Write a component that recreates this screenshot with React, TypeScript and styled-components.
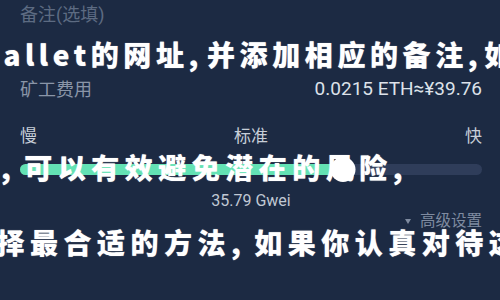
import styled, { createGlobalStyle } from 'styled-components';

const GlobalStyle = createGlobalStyle`
  html, body {
    margin: 0;
    padding: 0;
    background: #1c2a43;
  }
  body {
    font-family: Roboto, "Noto Sans CJK SC", sans-serif;
  }
`;

const Screen = styled.div`
  position: relative;
  width: 500px;
  height: 300px;
  box-sizing: border-box;
  padding: 3px 18px 0 20px;
  background: #1c2a43;
  overflow: hidden;
  display: flex;
  flex-direction: column;
`;

const Placeholder = styled.div`
  font-size: 18px;
  line-height: 24px;
  color: #5d6b82;
`;

const FeeRow = styled.div`
  margin-top: 49px;
  height: 24px;
  display: flex;
  justify-content: space-between;
  align-items: center;
`;

const Label = styled.span`
  font-size: 18px;
  color: #8a95a8;
`;

const FeeValue = styled.span`
  font-size: 19px;
  color: #dde2ea;
`;

const SpeedRow = styled.div`
  margin-top: 22px;
  height: 24px;
  display: grid;
  grid-template-columns: 1fr auto 1fr;
  align-items: center;
  font-size: 17px;
  color: #c7ced8;
`;

const Speed = styled.span<{ $align: 'left' | 'center' | 'right' }>`
  text-align: ${p => p.$align};
`;

const Slider = styled.div`
  position: relative;
  margin-top: 11px;
  height: 25px;
  display: flex;
  align-items: center;
`;

const Track = styled.div`
  flex: 1;
  height: 11px;
  border-radius: 6px;
  background: #2f3d5a;
  overflow: hidden;
`;

const Fill = styled.div`
  height: 100%;
  background: #63e2b4;
`;

const Thumb = styled.div`
  position: absolute;
  top: 0;
  width: 25px;
  height: 25px;
  border-radius: 50%;
  background: #fff;
  transform: translateX(-50%);
`;

const GasValue = styled.div`
  margin-top: 9px;
  text-align: center;
  font-size: 16px;
  line-height: 20px;
  color: #c0c8d4;
`;

const Advanced = styled.div`
  display: flex;
  justify-content: flex-end;
  align-items: center;
  gap: 9px;
  font-size: 15.5px;
  line-height: 20px;
  color: #7f8ba0;
`;

const Caret = styled.span`
  width: 0;
  height: 0;
  border-left: 3px solid transparent;
  border-right: 3px solid transparent;
  border-top: 5px solid currentColor;
`;

// the big brush text lies over the whole form
const Overlay = styled.div`
  position: absolute;
  inset: 0;
  pointer-events: none;
`;

const Line = styled.div<{ $top: number; $left: number; $spacing: number }>`
  position: absolute;
  top: ${p => p.$top}px;
  left: ${p => p.$left}px;
  white-space: nowrap;
  font-family: "Noto Sans CJK SC", sans-serif;
  font-weight: 900;
  font-size: 28px;
  line-height: 28px;
  letter-spacing: ${p => p.$spacing}px;
  color: #fff;
  text-shadow: 0 0 1px rgba(255, 255, 255, 0.6);
`;

const Comma = styled.span<{ $gap?: number }>`
  margin-right: ${p => p.$gap ?? 8}px;
`;

const gasLevel = 70;

export default function App() {
  return (
    <>
      <GlobalStyle />
      <Screen>
        <Placeholder>备注(选填)</Placeholder>
        <FeeRow>
          <Label>矿工费用</Label>
          <FeeValue>0.0215 ETH≈¥39.76</FeeValue>
        </FeeRow>
        <SpeedRow>
          <Speed $align="left">慢</Speed>
          <Speed $align="center">标准</Speed>
          <Speed $align="right">快</Speed>
        </SpeedRow>
        <Slider>
          <Track>
            <Fill style={{ width: `${gasLevel}%` }} />
          </Track>
          <Thumb style={{ left: `${gasLevel}%` }} />
        </Slider>
        <GasValue>35.79 Gwei</GasValue>
        <Advanced>
          <Caret />
          高级设置
        </Advanced>
        <Overlay>
          <Line $top={40} $left={-26} $spacing={4.6}>
            wallet的网址<Comma $gap={4}>,</Comma>并添加相应的备注<Comma $gap={2}>,</Comma>如果
          </Line>
          <Line $top={153} $left={1} $spacing={5.5}>
            <Comma>,</Comma>可以有效避免潜在的风险<Comma>,</Comma>
          </Line>
          <Line $top={228} $left={-37} $spacing={5.5}>
            选择最合适的方法<Comma>,</Comma>如果你认真对待这
          </Line>
        </Overlay>
      </Screen>
    </>
  );
}
